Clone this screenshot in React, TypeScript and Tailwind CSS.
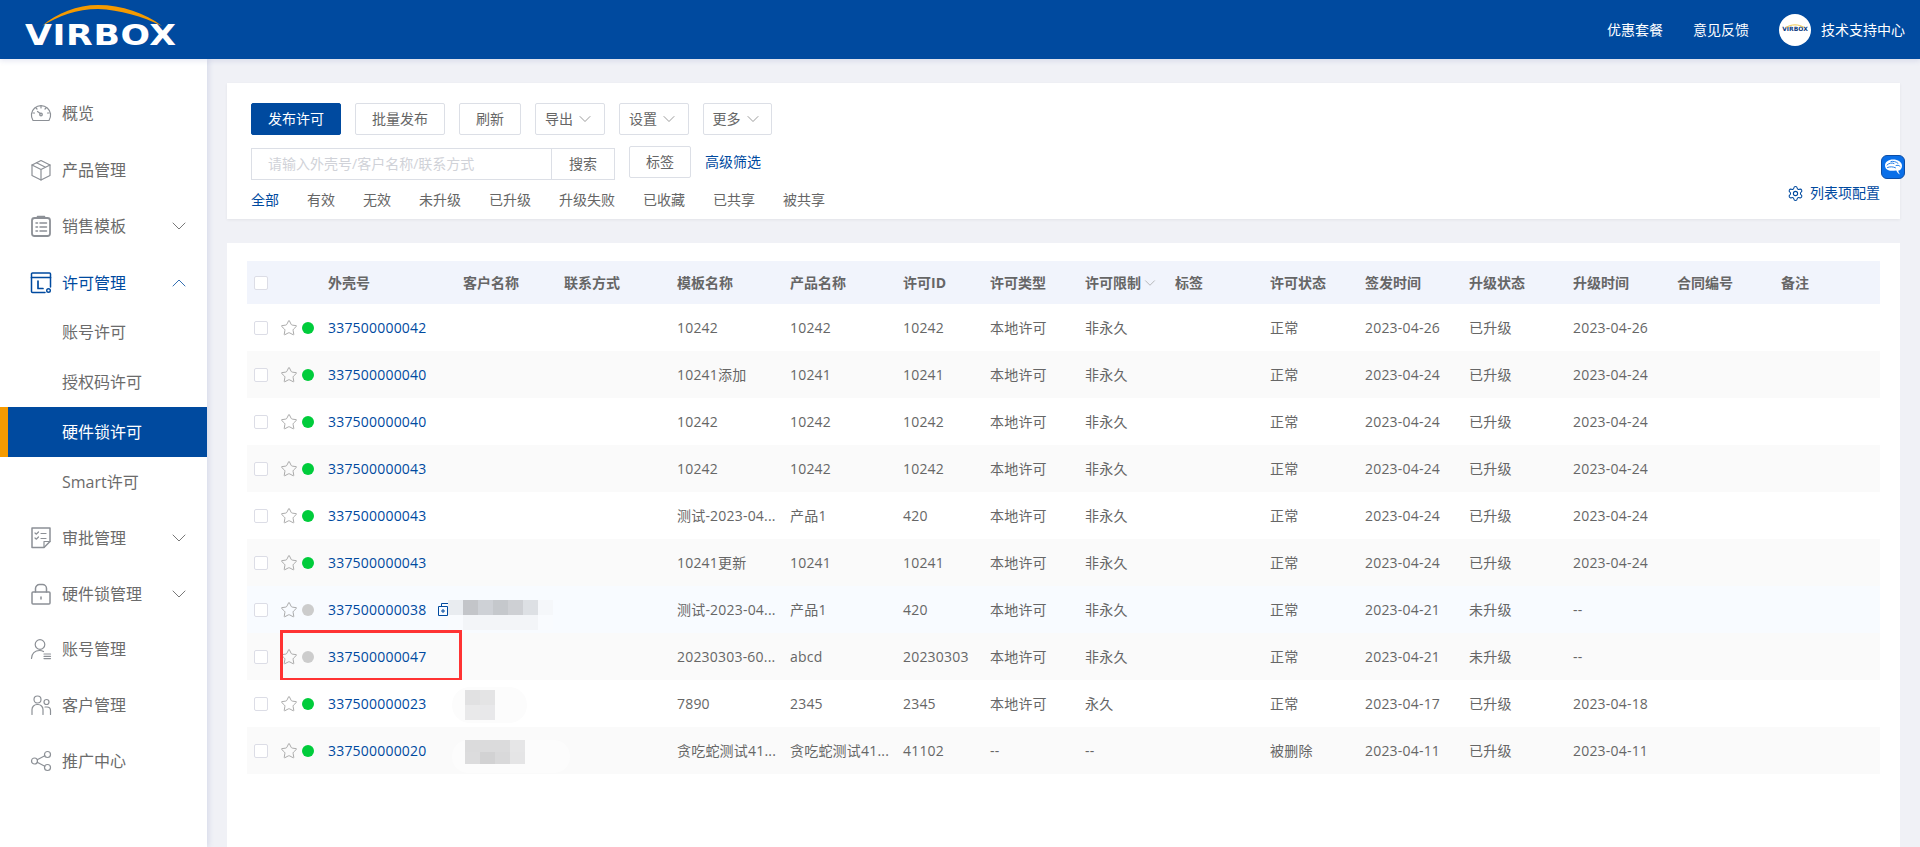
import { ChevronDown, ChevronUp, Settings, Star } from "lucide-react";
import type { ReactNode } from "react";

const FONT = "font-['Open_Sans','Noto_Sans_CJK_SC',sans-serif]";
const COLS = "grid grid-cols-[81px_135px_101px_113px_113px_113px_87px_95px_90px_95px_95px_104px_104px_104px_104px_99px]";

function Svg({ children }: { children: ReactNode }) {
  return (
    <svg width="22" height="22" viewBox="0 0 22 22" fill="none" stroke="currentColor" strokeWidth="1.2" strokeLinecap="round" strokeLinejoin="round">
      {children}
    </svg>
  );
}

const icons: Record<string, ReactNode> = {
  gauge: (
    <Svg>
      <path d="M3 18.5a9.6 9.6 0 1 1 16 0Z" />
      <path d="M11 12 7.5 9.5M11 4v2M4.5 11H3M19 11h-1.500M6 6l1 1M16 6l-1 1" />
      <circle cx="11" cy="12.500" r="1.300" />
    </Svg>
  ),
  box: (
    <Svg>
      <path d="M11 1.500 20 6v10.500l-9 4.500-9-4.500V6Z" />
      <path d="M2 6l9 4.500L20 6M11 10.500V21M6.500 3.800l9 4.500" />
    </Svg>
  ),
  clipboard: (
    <Svg>
      <rect x="2" y="3" width="18" height="18" rx="2.500" strokeWidth="1.800" />
      <path d="M7.500 3V1.500h7V3M6 8h1.500M10 8h6.500M6 12h1.500M10 12h6.500M6 16h1.500M10 16h6.500" strokeWidth="1.500" />
    </Svg>
  ),
  license: (
    <Svg>
      <path d="M15 20.500H2.500a1 1 0 0 1-1-1V2a1 1 0 0 1 1-1h17a1 1 0 0 1 1 1v13" strokeWidth="1.500" />
      <path d="M1.500 5.500h19M8 9v7.500h5" strokeWidth="1.700" />
      <circle cx="18.500" cy="18.500" r="1.800" strokeWidth="1.400" />
    </Svg>
  ),
  approve: (
    <Svg>
      <path d="M14 20.500H2V1h18v13.500Z" strokeWidth="1.500" />
      <path d="M14 20.500v-6h6M5 6l1.200 1.200L8.500 5M11 6.500h5M5 11l1.200 1.200L8.500 10M11 11.500h5" />
    </Svg>
  ),
  lock: (
    <Svg>
      <rect x="2" y="9" width="18" height="12" rx="1" strokeWidth="1.500" />
      <path d="M5.500 9V5.500a4 4 0 0 1 4-4h3a4 4 0 0 1 4 4V9M11 14v2" strokeWidth="1.500" />
    </Svg>
  ),
  account: (
    <Svg>
      <circle cx="10" cy="6.500" r="4.800" />
      <path d="M1.500 20.500c0-5 3.500-8 8-8 1.500 0 3 .4 4 1M14 16h6.500M14 18.300h6.500M14 20.600h6.500" />
    </Svg>
  ),
  customer: (
    <Svg>
      <circle cx="7.500" cy="5.500" r="3.500" />
      <circle cx="16.500" cy="8" r="2.500" />
      <path d="M2 20.500v-5a5 5 0 0 1 5-5h1a5 5 0 0 1 5 5v5M15 13h2a3.500 3.500 0 0 1 3.500 3.500v4" />
    </Svg>
  ),
  share: (
    <Svg>
      <circle cx="4.500" cy="11" r="3" />
      <circle cx="17.500" cy="4.500" r="3" />
      <circle cx="17.500" cy="17.500" r="3" />
      <path d="M7.200 9.700 14.800 5.800M7.200 12.300l7.600 3.900" />
    </Svg>
  ),
};

function NavItem({ icon, label, expand, active }: { icon: string; label: string; expand?: "up" | "down"; active?: boolean }) {
  return (
    <div className={`flex h-14 items-center pl-[30px] pr-[16px] ${active ? "text-[#004a9f]" : "text-[#6b6b6b]"}`}>
      <span className={`mr-[10px] flex w-[22px] justify-center ${active ? "text-[#004a9f]" : "text-[#8c9096]"}`}>{icons[icon]}</span>
      <span className="flex-1 text-base">{label}</span>
      {expand === "down" && <ChevronDown size={24} strokeWidth={0.8} className="text-[#555]" />}
      {expand === "up" && <ChevronUp size={24} strokeWidth={0.8} className="text-[#004a9f]" />}
    </div>
  );
}

function Sidebar() {
  return (
    <aside className="relative z-10 w-[207px] shrink-0 bg-white pt-[26px] shadow-[2px_0_5px_rgba(80,90,170,0.14)]">
      <div className="flex flex-col gap-[0.5px]">
        <NavItem icon="gauge" label="概览" />
        <NavItem icon="box" label="产品管理" />
        <NavItem icon="clipboard" label="销售模板" expand="down" />
        <NavItem icon="license" label="许可管理" expand="up" active />
      </div>
      <div className="-mt-[3.5px] mb-[3px] text-base text-[#6b6b6b]">
        <div className="flex h-[50px] items-center pl-[62px]">账号许可</div>
        <div className="flex h-[50px] items-center pl-[62px]">授权码许可</div>
        <div className="flex h-[50px] items-center border-l-[8px] border-[#f59a00] bg-[#004a9f] pl-[54px] text-white">硬件锁许可</div>
        <div className="flex h-[50px] items-center pl-[62px]">Smart许可</div>
      </div>
      <NavItem icon="approve" label="审批管理" expand="down" />
      <NavItem icon="lock" label="硬件锁管理" expand="down" />
      <div className="-mt-px">
        <NavItem icon="account" label="账号管理" />
        <NavItem icon="customer" label="客户管理" />
        <NavItem icon="share" label="推广中心" />
      </div>
    </aside>
  );
}

function Header() {
  return (
    <header className="relative z-20 flex h-[59px] shrink-0 items-center justify-between bg-[#004a9f] pr-[15px] text-sm text-white shadow-[0_2px_5px_rgba(80,90,170,0.14)]">
      <div className="relative ml-[25px] h-[59px] w-[150px]">
        <svg className="absolute left-[17px] top-[4px]" width="120" height="24" viewBox="0 0 120 24" fill="none">
          <path d="M0 22C15 9 35 1 56 1c24 0 47 8 64 21C100 12 78 6 56 5 35 5 16 12 0 22Z" fill="#f59a00" />
        </svg>
        <span className="absolute left-0 top-[19px] origin-left scale-x-[1.24] font-['DejaVu_Sans',sans-serif] text-[28px] font-bold leading-[34px] tracking-[0.5px]">
          VIRBOX
        </span>
      </div>
      <div className="flex items-center">
        <span>优惠套餐</span>
        <span className="ml-[30px]">意见反馈</span>
        <span className="relative ml-[30px] mr-[10px] flex h-8 w-8 items-center justify-center rounded-full bg-white">
          <svg className="absolute left-[6px] top-[9px]" width="20" height="5" viewBox="0 0 20 5" fill="none">
            <path d="M1 4.500C6 1 14 1 19 4.500" stroke="#f2c94c" strokeWidth="1" />
          </svg>
          <span className="font-['DejaVu_Sans',sans-serif] text-[6px] font-bold text-[#0b3a80]">VIRBOX</span>
        </span>
        <span>技术支持中心</span>
      </div>
    </header>
  );
}

function Btn({ children, primary, w, caret }: { children: ReactNode; primary?: boolean; w: string; caret?: boolean }) {
  return (
    <button
      className={`flex h-8 items-center justify-center rounded-[2px] border text-sm ${w} ${
        primary ? "border-[#004a9f] bg-[#004a9f] text-white" : "border-[#dcdfe6] bg-white text-[#666]"
      }`}
    >
      {children}
      {caret && <ChevronDown size={20} strokeWidth={1} className="ml-[2px] text-[#888]" />}
    </button>
  );
}

function BrainBadge() {
  return (
    <span className="absolute left-[1654px] top-[72px] flex h-6 w-6 items-center justify-center rounded-[6px] border border-[#0d4ea6] bg-[#0a6fe8]">
      <svg width="19" height="19" viewBox="0 0 19 19" fill="none">
        <path d="M1 7.500C1 4 4.500 1.500 9 1.500c5 0 9 2.500 9 6.500 0 2.800-1.700 4.300-3.800 4.700.3 1.300 1 2.500 1.800 3.800-1.800-.8-3.200-2.500-3.700-3.900C8 13 6 13 4.500 12.300 2.300 11.500 1 9.800 1 7.500Z" fill="#ffffff" />
        <path d="M3 7c2-2 5-2.500 7-1.500M3.500 9.500c2.500-1 5.500-1 8 .3M7 3.500c2-.5 5 0 7 1.800M12 7.500c1.500-.5 3-.2 4 .8" stroke="#0a6fe8" strokeWidth="0.9" strokeLinecap="round" />
      </svg>
    </span>
  );
}

const TABS = ["全部", "有效", "无效", "未升级", "已升级", "升级失败", "已收藏", "已共享", "被共享"];

function Toolbar() {
  return (
    <section className="relative h-[136px] shrink-0 bg-white px-6 pt-5 shadow-[0_1px_3px_rgba(0,0,0,0.06)]">
      <div className="flex gap-[14px]">
        <Btn primary w="w-[90px]">发布许可</Btn>
        <Btn w="w-[90px]">批量发布</Btn>
        <Btn w="w-[62px]">刷新</Btn>
        <Btn w="w-[70px]" caret>导出</Btn>
        <Btn w="w-[70px]" caret>设置</Btn>
        <Btn w="w-[69px]" caret>更多</Btn>
      </div>
      <div className="mt-[11px] flex h-[34px] items-start">
        <div className="mt-[2px] flex h-8 w-[364px] border border-[#dcdfe6] text-sm">
          <div className="flex w-[300px] items-center border-r border-[#dcdfe6] pl-[16px] text-[#d0d2d8]">请输入外壳号/客户名称/联系方式</div>
          <div className="flex flex-1 items-center justify-center text-[#666]">搜索</div>
        </div>
        <div className="ml-[14px]">
          <Btn w="w-[62px]">标签</Btn>
        </div>
        <span className="ml-[14px] flex h-8 items-center text-sm text-[#004a9f]">高级筛选</span>
      </div>
      <div className="mt-[10px] flex gap-[28px] text-sm leading-[20px] text-[#666]">
        {TABS.map((t, i) => (
          <span key={t} className={i === 0 ? "text-[#004a9f]" : ""}>{t}</span>
        ))}
      </div>
      <div className="absolute right-5 top-[100px] flex items-center gap-[6px] text-sm text-[#004a9f]">
        <Settings size={17} strokeWidth={1.5} />
        <span>列表项配置</span>
      </div>
      <BrainBadge />
    </section>
  );
}

const HEADERS = ["外壳号", "客户名称", "联系方式", "模板名称", "产品名称", "许可ID", "许可类型", "许可限制", "标签", "许可状态", "签发时间", "升级状态", "升级时间", "合同编号", "备注"];

type Row = {
  id: string;
  on: boolean;
  tpl: string;
  prod: string;
  lid: string;
  type: string;
  limit: string;
  status: string;
  date: string;
  up: string;
  upDate: string;
};

const ROWS: Row[] = [
  { id: "337500000042", on: true, tpl: "10242", prod: "10242", lid: "10242", type: "本地许可", limit: "非永久", status: "正常", date: "2023-04-26", up: "已升级", upDate: "2023-04-26" },
  { id: "337500000040", on: true, tpl: "10241添加", prod: "10241", lid: "10241", type: "本地许可", limit: "非永久", status: "正常", date: "2023-04-24", up: "已升级", upDate: "2023-04-24" },
  { id: "337500000040", on: true, tpl: "10242", prod: "10242", lid: "10242", type: "本地许可", limit: "非永久", status: "正常", date: "2023-04-24", up: "已升级", upDate: "2023-04-24" },
  { id: "337500000043", on: true, tpl: "10242", prod: "10242", lid: "10242", type: "本地许可", limit: "非永久", status: "正常", date: "2023-04-24", up: "已升级", upDate: "2023-04-24" },
  { id: "337500000043", on: true, tpl: "测试-2023-04...", prod: "产品1", lid: "420", type: "本地许可", limit: "非永久", status: "正常", date: "2023-04-24", up: "已升级", upDate: "2023-04-24" },
  { id: "337500000043", on: true, tpl: "10241更新", prod: "10241", lid: "10241", type: "本地许可", limit: "非永久", status: "正常", date: "2023-04-24", up: "已升级", upDate: "2023-04-24" },
  { id: "337500000038", on: false, tpl: "测试-2023-04...", prod: "产品1", lid: "420", type: "本地许可", limit: "非永久", status: "正常", date: "2023-04-21", up: "未升级", upDate: "--" },
  { id: "337500000047", on: false, tpl: "20230303-60...", prod: "abcd", lid: "20230303", type: "本地许可", limit: "非永久", status: "正常", date: "2023-04-21", up: "未升级", upDate: "--" },
  { id: "337500000023", on: true, tpl: "7890", prod: "2345", lid: "2345", type: "本地许可", limit: "永久", status: "正常", date: "2023-04-17", up: "已升级", upDate: "2023-04-18" },
  { id: "337500000020", on: true, tpl: "贪吃蛇测试41...", prod: "贪吃蛇测试41...", lid: "41102", type: "--", limit: "--", status: "被删除", date: "2023-04-11", up: "已升级", upDate: "2023-04-11" },
];

// mosaic over the customer names, cells are 15px wide
const MOSAICS: Record<number, { left: number; top: number; h: number; rows: string[][]; halo?: string }> = {
  6: {
    left: 201,
    top: 14,
    h: 15,
    rows: [
      ["#e9ecf0", "#c3c5c9", "#ced1d6", "#c5c8cc", "#ced0d4", "#dde0e4", "#f5f7fa"],
      ["#f9fbfe", "#f3f5f8", "#f3f5f8", "#f3f5f8", "#f3f5f8", "#f3f5f8", "#f9fbfe"],
    ],
  },
  8: {
    left: 218,
    top: 10,
    h: 15,
    halo: "absolute left-[205px] top-[7px] h-[36px] w-[75px] rounded-[18px] bg-[#fcfcfc]",
    rows: [
      ["#e1e1e2", "#e4e4e5"],
      ["#e9e9ea", "#e8e8ea"],
    ],
  },
  9: {
    left: 218,
    top: 13,
    h: 12,
    halo: "absolute left-[205px] top-[13px] h-[33px] w-[118px] rounded-[16px] bg-[#fcfcfc]",
    rows: [
      ["#dbdbdc", "#dbdbdc", "#dbdbdc", "#e6e6e7"],
      ["#dcdcdd", "#d2d2d3", "#d9d9da", "#e5e5e6"],
    ],
  },
};

function Check() {
  return <span className="mt-[1px] block h-[14px] w-[14px] rounded-[2px] border border-[#dcdde6] bg-white" />;
}

function TableRow({ row, index }: { row: Row; index: number }) {
  const mosaic = MOSAICS[index];
  const bg = index === 6 ? "bg-[#f8fbff]" : index % 2 === 1 ? "bg-[#fafafa]" : "bg-white";
  return (
    <div className={`relative ${COLS} h-[47px] items-center text-sm tracking-[0.2px] text-[#666] ${bg}`}>
      <div className="flex items-center pl-[7px]">
        <Check />
        <Star size={18} strokeWidth={1.1} className="ml-[12px] text-[#999]" />
        <span className={`ml-[4px] h-3 w-3 rounded-full ${row.on ? "bg-[#00cc3b]" : "bg-[#cccccc]"}`} />
      </div>
      <div className="text-[#004a9f]">{row.id}</div>
      <div />
      <div />
      <div>{row.tpl}</div>
      <div>{row.prod}</div>
      <div>{row.lid}</div>
      <div>{row.type}</div>
      <div>{row.limit}</div>
      <div />
      <div>{row.status}</div>
      <div>{row.date}</div>
      <div>{row.up}</div>
      <div>{row.upDate}</div>
      {index === 6 && (
        <svg className="absolute left-[191px] top-[17px]" width="13" height="13" viewBox="0 0 13 13" fill="none" stroke="#004a9f" strokeWidth="1">
          <path d="M3.500 3V.5h9v9H10M.5 3.500h9v9h-9Z" />
          <path d="M3 8h4M5 6v4" />
        </svg>
      )}
      {mosaic?.halo && <div className={mosaic.halo} />}
      {mosaic && (
        <div className="absolute" style={{ left: mosaic.left, top: mosaic.top }}>
          {mosaic.rows.map((cells, r) => (
            <div key={r} className="flex" style={{ height: mosaic.h }}>
              {cells.map((c, i) => (
                <span key={i} className="w-[15px]" style={{ background: c }} />
              ))}
            </div>
          ))}
        </div>
      )}
      {index === 7 && <div className="absolute -top-[3px] left-[33px] h-[51px] w-[182px] border-[3px] border-[#ff3333]" />}
    </div>
  );
}

function LicenseTable() {
  return (
    <section className="flex-1 bg-white px-5 pt-[18px]">
      <div className={`${COLS} h-[43px] items-center bg-[#f1f4fc] text-sm font-bold text-[#666]`}>
        <div className="pl-[7px]">
          <Check />
        </div>
        {HEADERS.map((h) => (
          <div key={h} className="flex items-center">
            {h}
            {h === "许可限制" && <ChevronDown size={18} strokeWidth={0.9} className="text-[#999]" />}
          </div>
        ))}
      </div>
      {ROWS.map((row, i) => (
        <TableRow key={i} row={row} index={i} />
      ))}
    </section>
  );
}

export default function App() {
  return (
    <div className={`flex h-[847px] w-[1920px] flex-col overflow-hidden bg-[#f0f1f6] ${FONT}`}>
      <Header />
      <div className="flex min-h-0 flex-1">
        <Sidebar />
        <main className="flex min-w-0 flex-1 flex-col gap-6 px-5 pt-6">
          <Toolbar />
          <LicenseTable />
        </main>
      </div>
    </div>
  );
}
